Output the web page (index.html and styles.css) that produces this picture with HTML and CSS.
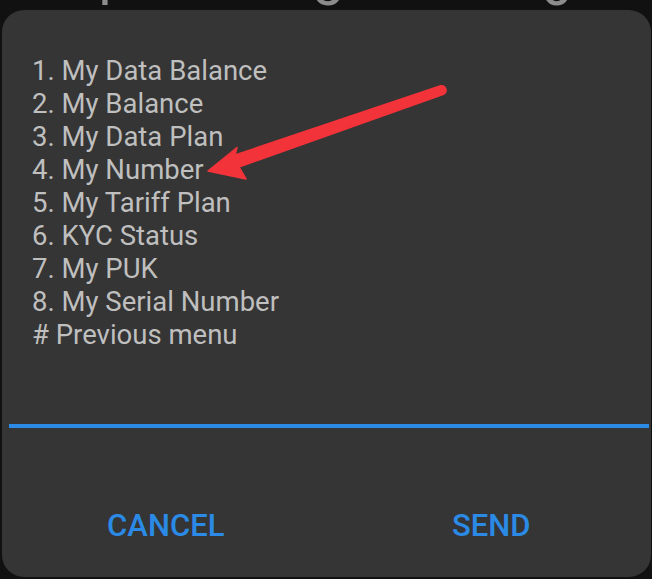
FILE: index.html
```html
<!DOCTYPE html>
<html lang="en">
<head>
  <meta charset="UTF-8" />
  <meta name="viewport" content="width=device-width, initial-scale=1" />
  <title>USSD Menu</title>
  <link rel="stylesheet" href="styles.css">
</head>
<body>
  <div class="keys" aria-hidden="true">
    <span class="key">4</span>
    <span class="key">5</span>
    <span class="key">6</span>
  </div>

  <div class="dialog" role="dialog" aria-label="USSD menu">
    <ul class="menu">
      <li>1. My Data Balance</li>
      <li>2. My Balance</li>
      <li>3. My Data Plan</li>
      <li>4. My Number</li>
      <li>5. My Tariff Plan</li>
      <li>6. KYC Status</li>
      <li>7. My PUK</li>
      <li>8. My Serial Number</li>
      <li># Previous menu</li>
    </ul>

    <div class="reply-field"></div>

    <div class="actions">
      <button type="button" class="action">CANCEL</button>
      <button type="button" class="action send">SEND</button>
    </div>

    <!-- annotation arrow drawn on top of the screenshot -->
    <svg class="arrow" width="652" height="579" viewBox="0 0 652 579" aria-hidden="true">
      <path d="M440.7 85.8 A4.6 4.6 0 0 1 443.6 94.4 L239 167 L246 179 L208 171 L237 147.5 L235 155 Z" fill="#f3333a" stroke="#f3333a" stroke-width="1.5" stroke-linejoin="round" />
    </svg>
  </div>
</body>
</html>
```

FILE: styles.css
```css
*, *::before, *::after {
  box-sizing: border-box;
}
html {
  font-family: Roboto, 'Noto Sans', sans-serif;
  background-color: #111111;
}
body {
  margin: 0;
  width: 652px;
  height: 579px;
  overflow: hidden;
  background: #111111;
  position: relative;
}

/* keypad peeking out behind the dialog */
.keys {
  height: 10px;
  overflow: hidden;
  display: flex;
  justify-content: space-between;
  padding: 0 80px 0 82px;
}
.key {
  font-size: 58px;
  line-height: 1;
  margin-top: -44px;
  color: #8c8c8c;
  font-weight: 400;
}

/* DIALOG */
.dialog {
  margin-left: 2px;
  width: 649px;
  height: 567px;
  background: #353535;
  border-radius: 22px;
  padding-top: 44px;
  display: flex;
  flex-direction: column;
}

.menu {
  list-style: none;
  margin: 0;
  padding: 0 0 0 30px;
  font-size: 27.5px;
  line-height: 33px;
  color: #bfbfbf;
}

.reply-field {
  margin: 73px 2px 0 7px;
  height: 4px;
  background: #2a8ae6;
}

.actions {
  display: flex;
  margin-top: 78px;
  padding-left: 4px;
}
.action {
  flex: 1;
  background: none;
  border: none;
  padding: 0;
  font-family: Roboto, sans-serif;
  font-size: 31px;
  line-height: 40px;
  font-weight: 500;
  color: #2a8ae6;
  cursor: pointer;
}
.action.send {
  padding-left: 6px;
}

.arrow {
  position: absolute;
  left: 0;
  top: 0;
  pointer-events: none;
}
```
